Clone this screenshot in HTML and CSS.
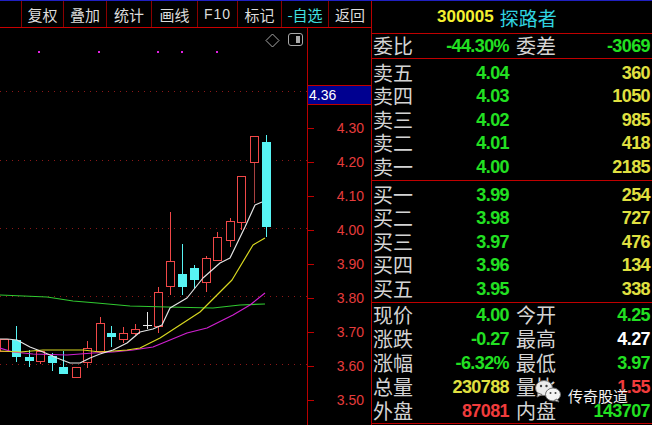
FILE: index.html
```html
<!DOCTYPE html>
<html lang="zh">
<head>
<meta charset="utf-8">
<title>300005 探路者</title>
<link rel="stylesheet" href="styles.css">
</head>
<body>
<div class="screen">
  <div class="left">
    <div class="toolbar">
      <span class="tb w42">复权</span>
      <span class="tb w43">叠加</span>
      <span class="tb w45">统计</span>
      <span class="tb w46">画线</span>
      <span class="tb w40 latin">F10</span>
      <span class="tb w44">标记</span>
      <span class="tb w47 fav">-自选</span>
      <span class="tb w43">返回</span>
    </div>
    <div class="chart-row">
      <svg class="chart" viewBox="0 28 307 397" width="307" height="397" xmlns="http://www.w3.org/2000/svg">
        <g stroke="#8c1818" stroke-dasharray="1 5" shape-rendering="crispEdges">
          <line x1="0" y1="91.5" x2="307" y2="91.5"/>
          <line x1="0" y1="160.5" x2="307" y2="160.5"/>
          <line x1="0" y1="228.5" x2="307" y2="228.5"/>
          <line x1="0" y1="296.5" x2="307" y2="296.5"/>
          <line x1="0" y1="364.5" x2="307" y2="364.5"/>
        </g>
        <g fill="#e020e0">
          <rect x="38" y="51" width="2" height="2"/>
          <rect x="98" y="51" width="2" height="2"/>
          <rect x="157" y="51" width="2" height="2"/>
          <rect x="181" y="51" width="2" height="2"/>
          <rect x="216" y="51" width="2" height="2"/>
        </g>
        <polygon points="272.5,34 279,40.5 272.5,47 266,40.5" fill="none" stroke="#a8a8a8"/>
        <rect x="288.5" y="33.5" width="14" height="12" rx="2.5" fill="none" stroke="#a8a8a8"/>
        <rect x="296" y="36" width="4" height="7" fill="#a8a8a8"/>

        <g shape-rendering="crispEdges">
          <g stroke="#f04848">
            <line x1="40.5" y1="351" x2="40.5" y2="364"/>
            <line x1="87.5" y1="341" x2="87.5" y2="368"/>
            <line x1="100.5" y1="317" x2="100.5" y2="323"/>
            <line x1="123.5" y1="327" x2="123.5" y2="343"/>
            <line x1="135.5" y1="324" x2="135.5" y2="335"/>
            <line x1="158.5" y1="287" x2="158.5" y2="333"/>
            <line x1="170.5" y1="212" x2="170.5" y2="295"/>
            <line x1="206.5" y1="256" x2="206.5" y2="292"/>
            <line x1="217.5" y1="232" x2="217.5" y2="261"/>
            <line x1="230.5" y1="218" x2="230.5" y2="247"/>
            <line x1="241.5" y1="223" x2="241.5" y2="230"/>
            <line x1="254.5" y1="163" x2="254.5" y2="203" stroke="#a84040"/>
          </g>
          <g stroke="#58f4f4">
            <line x1="16.5" y1="326" x2="16.5" y2="362"/>
            <line x1="29.5" y1="350" x2="29.5" y2="367"/>
            <line x1="52.5" y1="353" x2="52.5" y2="371"/>
            <line x1="63.5" y1="351" x2="63.5" y2="374"/>
            <line x1="111.5" y1="326" x2="111.5" y2="347"/>
            <line x1="182.5" y1="244" x2="182.5" y2="295"/>
            <line x1="194.5" y1="265" x2="194.5" y2="288"/>
            <line x1="266.5" y1="135" x2="266.5" y2="237"/>
          </g>
          <g fill="#000" stroke="#f04848">
            <rect x="0.5" y="339.5" width="8" height="12"/>
            <rect x="36.5" y="351.5" width="8" height="10"/>
            <rect x="72.5" y="367.5" width="8" height="10"/>
            <rect x="83.5" y="348.5" width="8" height="14"/>
            <rect x="96.5" y="323.5" width="8" height="28"/>
            <rect x="119.5" y="333.5" width="8" height="6"/>
            <rect x="131.5" y="329.5" width="8" height="4"/>
            <rect x="154.5" y="292.5" width="8" height="34"/>
            <rect x="166.5" y="261.5" width="8" height="25"/>
            <rect x="202.5" y="258.5" width="8" height="24"/>
            <rect x="213.5" y="237.5" width="8" height="23"/>
            <rect x="226.5" y="221.5" width="8" height="19"/>
            <rect x="237.5" y="176.5" width="8" height="46"/>
            <rect x="250.5" y="136.5" width="8" height="26"/>
          </g>
          <g fill="#58f4f4">
            <rect x="12" y="340" width="9" height="17"/>
            <rect x="25" y="357" width="9" height="4"/>
            <rect x="48" y="356" width="9" height="7"/>
            <rect x="59" y="367" width="9" height="7"/>
            <rect x="107" y="333" width="9" height="4"/>
            <rect x="178" y="274" width="9" height="13"/>
            <rect x="190" y="268" width="9" height="12"/>
            <rect x="262" y="142" width="9" height="85"/>
          </g>
          <g stroke="#e8e8e8">
            <line x1="147.5" y1="312" x2="147.5" y2="329"/>
            <line x1="143" y1="325.5" x2="152" y2="325.5"/>
          </g>
        </g>

        <g fill="none" stroke-width="1.2" stroke-linejoin="round">
          <polyline stroke="#30c830" points="0,295 47,297 73,301 97,303 130,306 167,307 213,308 240,305 265,304"/>
          <polyline stroke="#d020d0" points="0,348 13,352 33,354 67,355 93,353 113,352 133,350 153,347 170,340 187,333 207,328 233,315 250,305 265,293"/>
          <polyline stroke="#d8d820" points="0,351 20,352 43,350 83,350 100,352 127,350 140,348 160,338 180,325 200,312 232,280 253,245 265,238"/>
          <polyline stroke="#e4e4e4" points="0,339 7,339 17,340 30,347 43,352 57,358 70,363 80,363 90,358 100,354 113,350 127,343 140,332 153,329 162,325 170,308 187,298 203,278 220,263 230,258 245,227 255,205 262,202"/>
        </g>
      </svg>
      <div class="axis">
        <div class="cur">4.36</div>
        <div class="ticks">
          <div class="tick">4.30</div>
          <div class="tick">4.20</div>
          <div class="tick">4.10</div>
          <div class="tick">4.00</div>
          <div class="tick">3.90</div>
          <div class="tick">3.80</div>
          <div class="tick">3.70</div>
          <div class="tick">3.60</div>
          <div class="tick">3.50</div>
        </div>
      </div>
    </div>
  </div>

  <div class="panel">
    <div class="head"><span class="code">300005</span><span class="name">探路者</span></div>

    <div class="grid-row wb">
      <span class="lbl">委比</span><span class="num g">-44.30%</span>
      <span class="lbl lbl2">委差</span><span class="num g">-3069</span>
    </div>

    <div class="sec book">
      <div class="grid-row brow"><span class="lbl">卖五</span><span class="num g">4.04</span><span class="num y vol">360</span></div>
      <div class="grid-row brow"><span class="lbl">卖四</span><span class="num g">4.03</span><span class="num y vol">1050</span></div>
      <div class="grid-row brow"><span class="lbl">卖三</span><span class="num g">4.02</span><span class="num y vol">985</span></div>
      <div class="grid-row brow"><span class="lbl">卖二</span><span class="num g">4.01</span><span class="num y vol">418</span></div>
      <div class="grid-row brow"><span class="lbl">卖一</span><span class="num g">4.00</span><span class="num y vol">2185</span></div>
    </div>

    <div class="sec book">
      <div class="grid-row brow"><span class="lbl">买一</span><span class="num g">3.99</span><span class="num y vol">254</span></div>
      <div class="grid-row brow"><span class="lbl">买二</span><span class="num g">3.98</span><span class="num y vol">727</span></div>
      <div class="grid-row brow"><span class="lbl">买三</span><span class="num g">3.97</span><span class="num y vol">476</span></div>
      <div class="grid-row brow"><span class="lbl">买四</span><span class="num g">3.96</span><span class="num y vol">134</span></div>
      <div class="grid-row brow"><span class="lbl">买五</span><span class="num g">3.95</span><span class="num y vol">338</span></div>
    </div>

    <div class="sec stats">
      <div class="grid-row srow"><span class="lbl">现价</span><span class="num g">4.00</span><span class="lbl lbl2">今开</span><span class="num g">4.25</span></div>
      <div class="grid-row srow"><span class="lbl">涨跌</span><span class="num g">-0.27</span><span class="lbl lbl2">最高</span><span class="num w">4.27</span></div>
      <div class="grid-row srow"><span class="lbl">涨幅</span><span class="num g">-6.32%</span><span class="lbl lbl2">最低</span><span class="num g">3.97</span></div>
      <div class="grid-row srow"><span class="lbl">总量</span><span class="num y">230788</span><span class="lbl lbl2">量比</span><span class="num r">1.55</span></div>
      <div class="grid-row srow"><span class="lbl">外盘</span><span class="num r">87081</span><span class="lbl lbl2">内盘</span><span class="num g">143707</span></div>
    </div>

    <div class="wm">
      <svg class="wm-icon" viewBox="0 0 28 24" width="28" height="24" xmlns="http://www.w3.org/2000/svg">
        <ellipse cx="10" cy="9" rx="8.5" ry="7.5" fill="#ececec" stroke="#707070"/>
        <path d="M4 14 L3 18 L8 15.5 Z" fill="#ececec" stroke="#707070"/>
        <circle cx="7" cy="7" r="1.2" fill="#404040"/>
        <circle cx="12.5" cy="7" r="1.2" fill="#404040"/>
        <ellipse cx="19" cy="15.5" rx="7.5" ry="6.5" fill="#f4f4f4" stroke="#707070"/>
        <path d="M23 20 L25 23 L20 21.5 Z" fill="#f4f4f4" stroke="#707070"/>
        <circle cx="16.5" cy="14" r="1" fill="#404040"/>
        <circle cx="21.5" cy="14" r="1" fill="#404040"/>
      </svg>
      <span class="wm-text">传奇股道</span>
    </div>
  </div>
</div>
</body>
</html>
```
FILE: styles.css
```css
html, body {
  margin: 0;
  padding: 0;
  background: #000;
}
body {
  width: 652px;
  height: 425px;
  overflow: hidden;
  font-family: "Noto Sans CJK SC", "Noto Sans", sans-serif;
}
.screen {
  display: flex;
  border-top: 1px solid #2020c0;
  height: 424px;
}

/* left side */
.left {
  width: 371px;
  display: flex;
  flex-direction: column;
}
.toolbar {
  height: 26px;
  border-bottom: 1px solid #c80000;
  display: flex;
  padding-left: 21px;
}
.tb {
  box-sizing: border-box;
  border-left: 1px solid #8a0000;
  display: flex;
  align-items: center;
  justify-content: center;
  font-size: 15px;
  color: #dcdcdc;
  line-height: 1;
}
.tb.latin { font-family: "Liberation Sans", sans-serif; font-size: 14px; letter-spacing: 1px; }
.tb.fav { color: #40e0e0; }
.w40 { width: 40px; }
.w42 { width: 42px; }
.w43 { width: 43px; }
.w44 { width: 44px; }
.w45 { width: 45px; }
.w46 { width: 46px; }
.w47 { width: 47px; }

.chart-row {
  display: flex;
  height: 397px;
}
.chart {
  display: block;
  width: 307px;
  height: 397px;
}
.axis {
  width: 63px;
  border-left: 1px solid #b80000;
  font-family: "Liberation Sans", sans-serif;
  font-size: 14px;
}
.cur {
  margin-top: 57px;
  height: 18px;
  line-height: 18px;
  background: #000090;
  border-top: 1px solid #c00000;
  border-bottom: 1px solid #c00000;
  color: #ffffff;
  padding-left: 1px;
}
.ticks {
  margin-top: 6px;
}
.tick {
  height: 34px;
  display: flex;
  align-items: center;
  padding-right: 7px;
  color: #e63c3c;
}
.tick::before {
  content: "";
  width: 6px;
  height: 1px;
  background: #c00000;
  margin-right: auto;
}

/* right panel */
.panel {
  width: 280px;
  border-left: 1px solid #b80000;
  position: relative;
}
.head {
  height: 32px;
  border-bottom: 1px solid #c00000;
  display: flex;
  align-items: center;
  padding-left: 65px;
  gap: 6px;
}
.code {
  font-family: "Liberation Sans", sans-serif;
  font-weight: bold;
  font-size: 17px;
  color: #f4f030;
}
.name {
  font-size: 19px;
  color: #30d4e0;
  line-height: 1;
}
.grid-row {
  display: grid;
  grid-template-columns: 60px 76px 57px 84px;
  padding: 0 2px 0 1px;
  align-items: center;
}
.lbl {
  font-size: 20px;
  color: #d4d4d4;
  line-height: 1;
}
.lbl2 {
  padding-left: 7px;
}
.num {
  font-family: "Liberation Sans", sans-serif;
  font-weight: bold;
  font-size: 18px;
  letter-spacing: -0.6px;
  text-align: right;
  line-height: 1;
}
.vol {
  grid-column: 3 / 5;
}
.g { color: #22e022; }
.y { color: #e0e040; }
.r { color: #f03c3c; }
.w { color: #ffffff; }

.wb {
  height: 24px;
  border-bottom: 1px solid #c00000;
}
.sec {
  border-bottom: 1px solid #c00000;
}
.book {
  padding: 2px 0 1.5px;
}
.brow {
  height: 23.5px;
}
.srow {
  height: 24px;
}

.wm {
  position: absolute;
  left: 162px;
  top: 378px;
  display: flex;
  align-items: center;
  gap: 6px;
}
.wm-icon {
  display: block;
}
.wm-text {
  font-size: 15px;
  color: #f4f4f4;
  margin-top: 8px;
  line-height: 1;
  text-shadow: 0 0 2px #000, 0 0 1px #000;
}
```
